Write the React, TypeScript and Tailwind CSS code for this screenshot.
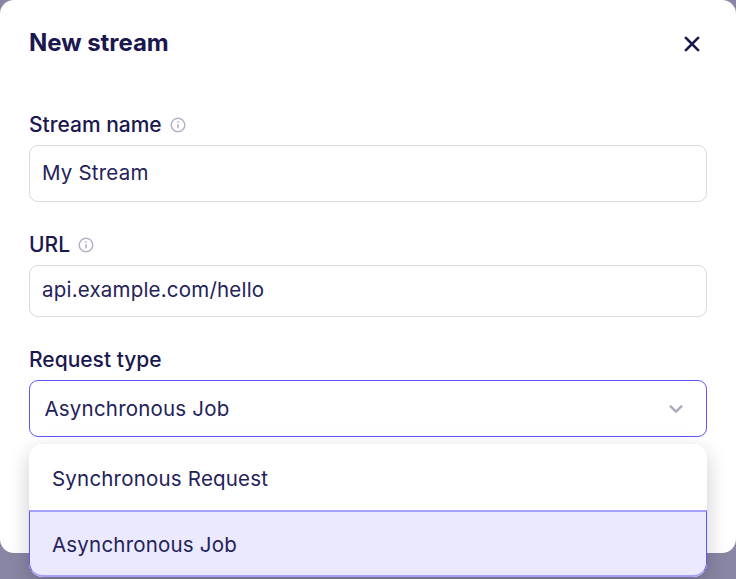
import React from 'react';

function InfoIcon() {
  return (
    <svg className="h-4 w-4 shrink-0" viewBox="0 0 16 16" fill="none" stroke="#b5b3ca">
      <circle cx="8" cy="8" r="6.8" strokeWidth="1.5" />
      <path d="M8 7.2v4" strokeWidth="1.7" />
      <path d="M8 4.2v1.6" strokeWidth="1.7" />
    </svg>
  );
}

function Label({ text, info }: { text: string; info?: boolean }) {
  return (
    <div className="flex h-6 items-center gap-2 text-[21px] font-medium leading-6">
      <span>{text}</span>
      {info && <InfoIcon />}
    </div>
  );
}

export default function App() {
  return (
    <div className="h-[579px] w-[736px] overflow-hidden bg-[#8886a4] font-['Inter',sans-serif] text-[#1a184f]">
      <div className="h-[553px] rounded-[14px] bg-white px-[29px] pt-[29px]">
        <header className="flex h-7 items-center justify-between">
          <h1 className="text-[24px] font-bold leading-7 tracking-[-0.05px]">New stream</h1>
          <button aria-label="Close" className="mr-[7px] mt-px">
            <svg className="h-4 w-4" viewBox="0 0 16 16" fill="none" stroke="#1a184f" strokeWidth="2.7" strokeLinecap="round">
              <path d="M1.9 1.9l12.2 12.2M14.1 1.9L1.9 14.1" />
            </svg>
          </button>
        </header>

        <div className="mt-14">
          <Label text="Stream name" info />
          <div className="mt-2 flex h-[57px] items-center rounded-[9px] border border-[#d9d9de] px-3 text-[20.5px] leading-6 tracking-[0.2px] text-[#24225a]">
            <span className="pb-px">My Stream</span>
          </div>
        </div>

        <div className="mt-[31px]">
          <Label text="URL" info />
          <div className="mt-2 flex h-[52px] items-center rounded-[9px] border border-[#d9d9de] px-3 pb-[2px] text-[20.5px] leading-6 tracking-[0.2px] text-[#24225a]">
            api.example.com/hello
          </div>
        </div>

        <div className="mt-[31px]">
          <Label text="Request type" />
          <div className="relative mt-2">
            <div className="flex h-[57px] items-center justify-between rounded-[9px] border border-[#5f55ff] pl-[14.5px] pr-[23px] text-[20.5px] leading-6 tracking-[0.2px] text-[#24225a]">
              <span className="pt-px">Asynchronous Job</span>
              <svg className="h-[14px] w-[14px]" viewBox="0 0 14 14" fill="none" stroke="#aaa8bd" strokeWidth="2.4" strokeLinecap="round" strokeLinejoin="round">
                <path d="M1.6 4.4L7 9.6l5.4-5.2" />
              </svg>
            </div>
            <ul className="absolute left-0 top-[64px] w-full overflow-hidden rounded-[14px] bg-white text-[20.5px] leading-6 tracking-[0.2px] text-[#24225a] shadow-[0_7px_22px_rgba(0,0,0,0.2)]">
              <li className="flex h-[66px] items-center pl-[23px] pt-1">Synchronous Request</li>
              <li className="flex h-[67px] items-center rounded-b-[14px] border border-y-2 border-[#5f55ff] border-y-[#a5a0fb] bg-[#ebe9fe] pl-[22px] pt-[3px]">
                Asynchronous Job
              </li>
            </ul>
          </div>
        </div>
      </div>
    </div>
  );
}
